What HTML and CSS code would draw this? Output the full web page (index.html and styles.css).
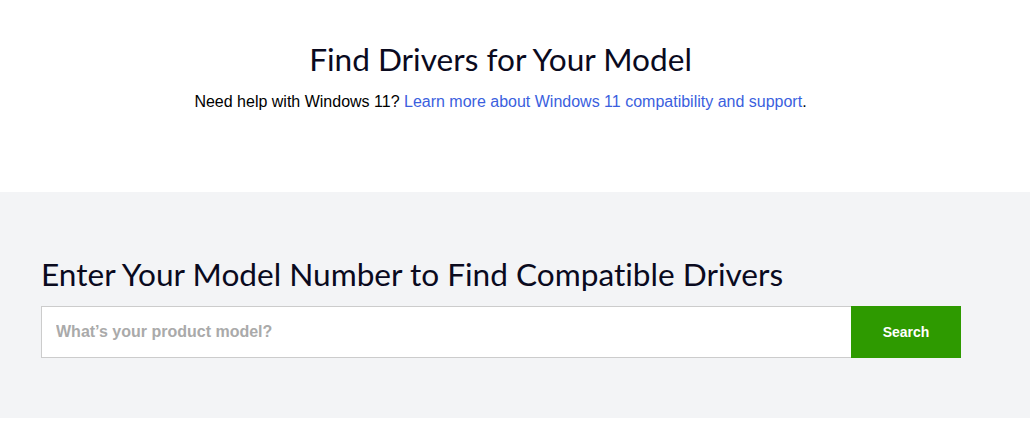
FILE: index.html
```html
<!DOCTYPE html>
<html>
<head>
<meta charset="utf-8">
<link rel="stylesheet" href="styles.css">
</head>
<body>
<section class="intro">
  <h1 class="title">Find Drivers for Your Model</h1>
  <p class="help">Need help with Windows 11? <a class="link" href="#">Learn more about Windows 11 compatibility and support</a>.</p>
</section>
<section class="finder">
  <h2 class="finder-title">Enter Your Model Number to Find Compatible Drivers</h2>
  <form class="search">
    <input class="search-input" type="text" placeholder="What’s your product model?">
    <button class="search-btn" type="button">Search</button>
  </form>
</section>
<div class="after"></div>
</body>
</html>
```
FILE: styles.css
```css
html, body {
  margin: 0;
  padding: 0;
  background: #fff;
}
body {
  font-family: "Liberation Sans", Arial, sans-serif;
  color: #000;
}
.intro {
  height: 192px;
  box-sizing: border-box;
  padding: 37px 29px 0 0;
  text-align: center;
}
.title {
  margin: 0;
  font-family: Lato, "Noto Sans", sans-serif;
  font-weight: 400;
  font-size: 31.6px;
  line-height: 44px;
  color: #0a0a1e;
  font-variant-ligatures: none;
}
.help {
  margin: 11px 0 0;
  font-size: 16px;
  line-height: 20px;
}
.link {
  color: #3b5fde;
  text-decoration: none;
}
.finder {
  background: #f3f4f6;
  height: 226px;
  box-sizing: border-box;
  padding: 60px 69px 0 41px;
}
.finder-title {
  margin: 0 0 10px;
  font-family: Lato, "Noto Sans", sans-serif;
  font-weight: 400;
  font-size: 31.6px;
  line-height: 44px;
  color: #0a0a1e;
  font-variant-ligatures: none;
}
.search {
  display: flex;
  height: 52px;
  margin: 0;
}
.search-input {
  flex: 1;
  box-sizing: border-box;
  height: 52px;
  border: 1px solid #cccccc;
  border-right: none;
  background: #fff;
  padding: 0 14px;
  font-family: "Liberation Sans", Arial, sans-serif;
  font-size: 16px;
  font-weight: 700;
  outline: none;
}
.search-input::placeholder {
  color: #aaaaaa;
}
.search-btn {
  width: 110px;
  height: 52px;
  border: none;
  background: #2e9a00;
  color: #fff;
  font-family: "Liberation Sans", Arial, sans-serif;
  font-weight: 700;
  font-size: 14px;
  cursor: pointer;
}
```
